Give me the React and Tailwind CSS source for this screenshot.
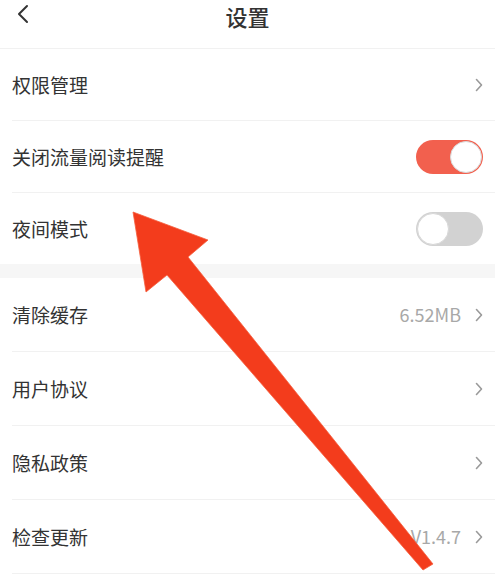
import React, { useState } from 'react';

const Chevron = () => (
  <svg width="8" height="14" viewBox="0 0 8 14" className="shrink-0">
    <path d="M1.5 1.5 L6.5 7 L1.5 12.5" fill="none" stroke="#9a9a9a" strokeWidth="1.6" strokeLinecap="round" strokeLinejoin="round" />
  </svg>
);

const Toggle = ({ on, onClick }) => (
  <button
    onClick={onClick}
    className={`relative w-[67px] h-[34px] rounded-full flex items-center p-[1px] ${on ? 'bg-[#f2604e] justify-end' : 'bg-[#d2d2d2] justify-start'}`}
  >
    <span className="block w-[32px] h-[32px] rounded-full bg-white border border-[#d8d8d8]" />
  </button>
);

const Row = ({ label, value, right, tall }) => (
  <div className={`flex items-center pl-3 pr-3 ${tall ? 'h-[73px]' : 'h-[71px]'}`}>
    <span className="flex-1 text-[19px] leading-[26px] text-[#333]">{label}</span>
    {value && <span className="text-[18px] text-[#a8a8a8] mr-[14px]">{value}</span>}
    {right}
  </div>
);

const Divider = () => <div className="ml-3 h-px bg-[#f1f1f1]" />;

export default function App() {
  const [flowTip, setFlowTip] = useState(true);
  const [night, setNight] = useState(false);

  return (
    <div
      className="relative w-[495px] h-[580px] overflow-hidden bg-white"
      style={{ fontFamily: '"Noto Sans CJK SC", "Noto Sans", sans-serif' }}
    >
      {/* Header */}
      <div className="relative h-[48px] flex justify-center">
        <button className="absolute left-[16px] top-[4px]">
          <svg width="14" height="20" viewBox="0 0 14 20">
            <path d="M11 2 L3 10 L11 18" fill="none" stroke="#333" strokeWidth="2" strokeLinecap="round" strokeLinejoin="round" />
          </svg>
        </button>
        <h1 className="text-[22px] leading-[32px] text-[#333] font-medium">设置</h1>
      </div>
      <div className="h-px bg-[#f1f1f1]" />

      <Row label="权限管理" right={<Chevron />} />
      <Divider />
      <Row label="关闭流量阅读提醒" right={<Toggle on={flowTip} onClick={() => setFlowTip(!flowTip)} />} />
      <Divider />
      <Row label="夜间模式" right={<Toggle on={night} onClick={() => setNight(!night)} />} />

      <div className="h-[14px] bg-[#f6f6f6]" />

      <Row tall label="清除缓存" value="6.52MB" right={<Chevron />} />
      <Divider />
      <Row tall label="用户协议" right={<Chevron />} />
      <Divider />
      <Row tall label="隐私政策" right={<Chevron />} />
      <Divider />
      <Row tall label="检查更新" value="V1.4.7" right={<Chevron />} />
      <Divider />

      {/* annotation arrow */}
      <svg className="absolute inset-0 pointer-events-none" width="495" height="580" viewBox="0 0 495 580">
        <polygon
          points="133,212 208,240 188,257 433,564 423,570 167,275 146,292"
          fill="#f33c1c"
          stroke="#f5603f"
          strokeWidth="0.8"
          strokeLinejoin="round"
        />
      </svg>
    </div>
  );
}
